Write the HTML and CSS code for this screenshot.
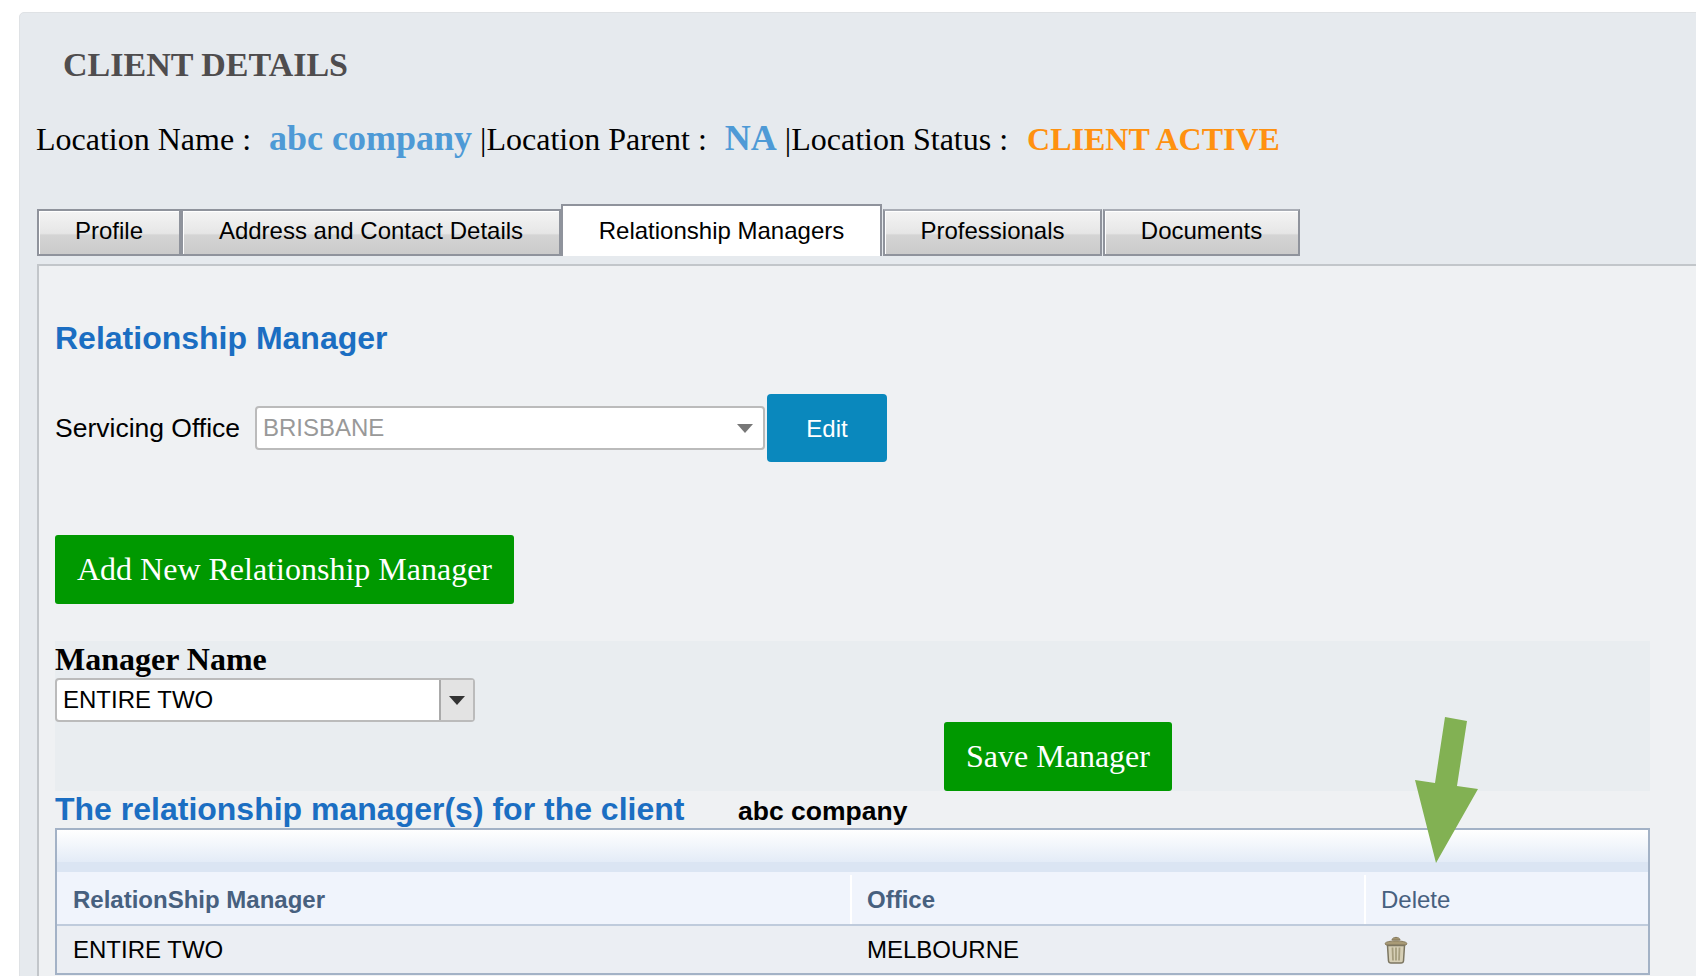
FILE: index.html
```html
<!DOCTYPE html>
<html lang="en">
<head>
<meta charset="utf-8">
<title>Client Details</title>
<link rel="stylesheet" href="styles.css">
</head>
<body>
<div class="panel">
  <h1 class="title">CLIENT DETAILS</h1>
  <div class="location">
    <span class="loc-label">Location Name :&nbsp;</span><span class="loc-value">&nbsp;abc company</span><span class="sep">&nbsp;|</span><span class="loc-label">Location Parent :&nbsp;</span><span class="loc-value">&nbsp;NA</span><span class="sep">&nbsp;|</span><span>Location Status :&nbsp;</span><span class="loc-status">&nbsp;CLIENT ACTIVE</span>
  </div>
  <div class="tabs">
    <div class="tab tab-profile">Profile</div>
    <div class="tab tab-address">Address and Contact Details</div>
    <div class="tab tab-active">Relationship Managers</div>
    <div class="tab tab-pro">Professionals</div>
    <div class="tab tab-docs">Documents</div>
  </div>
  <div class="content">
    <h2 class="heading">Relationship Manager</h2>
    <div class="office-row">
      <label class="office-label">Servicing Office</label>
      <div class="select-office">
        <span>BRISBANE</span>
        <svg class="caret" width="16" height="10" viewBox="0 0 16 10"><path d="M0 1h16L8 10z" fill="#777"/></svg>
      </div>
      <div class="btn-edit">Edit</div>
    </div>
    <div class="btn-green btn-add">Add New Relationship Manager</div>
    <div class="manager-block">
      <div class="manager-label">Manager Name</div>
      <div class="select-manager">
        <span class="select-value">ENTIRE TWO</span>
        <span class="select-btn"><svg width="16" height="10" viewBox="0 0 16 10"><path d="M0 1h16L8 10z" fill="#333"/></svg></span>
      </div>
      <div class="btn-green btn-save">Save Manager</div>
    </div>
    <div class="list-title">
      <span class="list-heading">The relationship manager(s) for the client</span>
      <span class="list-client">abc company</span>
    </div>
    <div class="grid">
      <div class="grid-top"></div>
      <div class="grid-head">
        <div class="col col-a th">RelationShip Manager</div>
        <div class="col col-b th">Office</div>
        <div class="col col-c th th-plain">Delete</div>
      </div>
      <div class="grid-row">
        <div class="col col-a">ENTIRE TWO</div>
        <div class="col col-b">MELBOURNE</div>
        <div class="col col-c">
          <svg width="24" height="28" viewBox="0 0 24 28">
            <path d="M8 4c0-3.500 8-3.500 8 0z" fill="#a3946f" stroke="#85785a" stroke-width="1"/>
            <path d="M1 7.500c1-3.500 21-3.500 22 0l-1 1.500H2z" fill="#a89a76" stroke="#8a7d5e" stroke-width="1"/>
            <path d="M3.500 9.500h17l-1 15.500c-.2 1.300-1 2-2.500 2H7c-1.500 0-2.300-.7-2.500-2z" fill="#d6cfb6" stroke="#7c7661" stroke-width="1.500"/>
            <path d="M8.500 11.500l.5 13M12 11.500v13M15.500 11.500l-.5 13" stroke="#a69e7f" stroke-width="1.800" fill="none"/>
          </svg>
        </div>
      </div>
    </div>
  </div>
  <svg class="arrow" width="65" height="148" viewBox="0 0 65 148"><polygon points="30,0 52,4 42,69 63,72 21,146 0,63 20,66" fill="#82b153"/></svg>
</div>
</body>
</html>
```
FILE: styles.css
```css
html, body {
  margin: 0;
  padding: 0;
  height: 976px;
  overflow: hidden;
  background: #fff;
}
body {
  font-family: "Liberation Sans", Arial, sans-serif;
  color: #000;
}
.panel {
  position: relative;
  box-sizing: border-box;
  width: 1800px;
  height: 1000px;
  margin: 12px 0 0 19px;
  padding: 0 0 0 17px;
  background: #e6eaee;
  border: 1px solid #dfe2e5;
  border-radius: 5px;
}
.title {
  margin: 32px 0 0 26px;
  height: 40px;
  font: bold 34px/40px "Liberation Serif", "Times New Roman", serif;
  color: #4f4d4e;
}
.location {
  display: flex;
  align-items: baseline;
  margin: 33px 0 0 -1px;
  height: 40px;
  font: 32px/40px "Liberation Serif", "Times New Roman", serif;
  white-space: pre;
}
.loc-label {
  padding-right: 1px;
}
.loc-value {
  font-size: 36px;
  font-weight: bold;
  color: #4e9ad6;
}
.loc-status {
  margin-left: 3px;
  font-size: 32px;
  font-weight: bold;
  color: #ff9110;
}
.tabs {
  display: flex;
  align-items: flex-end;
  margin-top: 46px;
  height: 52px;
}
.tab {
  box-sizing: border-box;
  height: 47px;
  padding-bottom: 4px;
  display: flex;
  align-items: center;
  justify-content: center;
  font-size: 24px;
  margin-right: 1px;
  border: 2px solid #8f939c;
  box-shadow: inset 1px 1px 0 #fff;
  background: linear-gradient(#f4f4f4 0, #e6e6e6 52%, #d4d4d4 56%, #cbcbcb 100%);
}
.tab-profile { width: 144px; margin-right: 0; }
.tab-address { width: 380px; margin-right: 0; }
.tab-active {
  width: 321px;
  height: 52px;
  padding-bottom: 0;
  background: #fff;
  border-bottom: 0;
  box-shadow: none;
}
.tab-pro { width: 219px; border-top-color: #a9adb5; }
.tab-docs { width: 197px; border-top-color: #a9adb5; }
.content {
  box-sizing: border-box;
  margin-top: 8px;
  height: 760px;
  padding: 54px 0 0 16px;
  background: #eff1f3;
  border: 2px solid #c2c6ca;
  border-right: 0;
}
.heading {
  margin: 0;
  height: 36px;
  font: bold 32px/36px "Liberation Sans", Arial, sans-serif;
  color: #1b6ec2;
}
.office-row {
  display: flex;
  align-items: center;
  margin-top: 38px;
  height: 68px;
}
.office-label {
  width: 200px;
  font-size: 26.500px;
}
.select-office {
  box-sizing: border-box;
  display: flex;
  align-items: center;
  justify-content: space-between;
  width: 510px;
  height: 44px;
  padding: 0 10px 0 6px;
  background: #fff;
  border: 2px solid #bbb;
  border-radius: 4px;
  font-size: 24px;
  color: #999;
}
.btn-edit {
  box-sizing: border-box;
  display: flex;
  align-items: center;
  justify-content: center;
  width: 120px;
  height: 68px;
  margin-left: 2px;
  padding-top: 2px;
  background: #0a88bd;
  border-radius: 4px;
  color: #fff;
  font-size: 24px;
}
.btn-green {
  box-sizing: border-box;
  display: flex;
  align-items: center;
  justify-content: center;
  height: 70px;
  background: #009900;
  border-radius: 3px;
  color: #fff;
  font: 32px "Liberation Serif", "Times New Roman", serif;
}
.btn-add {
  width: 459px;
  height: 69px;
  margin-top: 73px;
}
.manager-block {
  margin-top: 37px;
  height: 150px;
  width: 1595px;
  background: #e9edf0;
}
.manager-label {
  height: 37px;
  font: bold 32px/36px "Liberation Serif", "Times New Roman", serif;
}
.select-manager {
  box-sizing: border-box;
  display: flex;
  width: 420px;
  height: 44px;
  background: #fff;
  border: 2px solid #bbb;
  border-radius: 4px;
  font-size: 24px;
}
.select-value {
  flex: 1;
  padding-left: 6px;
  line-height: 40px;
}
.select-btn {
  display: flex;
  align-items: center;
  justify-content: center;
  width: 32px;
  background: #e3e3e3;
  border-left: 2px solid #aaa;
}
.btn-save {
  width: 228px;
  height: 69px;
  margin: 0 0 0 889px;
}
.list-title {
  display: flex;
  align-items: center;
  height: 37px;
}
.list-heading {
  width: 683px;
  font-size: 32px;
  font-weight: bold;
  color: #1b6ec2;
}
.list-client {
  padding-top: 3px;
  font-size: 26.500px;
  font-weight: bold;
}
.grid {
  box-sizing: border-box;
  width: 1595px;
  height: 147px;
  border: 2px solid #a3b2c6;
}
.grid-top {
  height: 42px;
  background: linear-gradient(#fff 0, #e4ecf7 75%, #dbe5f3 76%, #dbe5f3 100%);
}
.grid-head {
  display: flex;
  height: 54px;
  padding-top: 3px;
  background: #f0f4fc;
  border-bottom: 2px solid #bfcbdc;
  box-sizing: border-box;
}
.grid-row {
  display: flex;
  height: 47px;
  background: #ebeef3;
  font-size: 24px;
}
.col {
  box-sizing: border-box;
  display: flex;
  align-items: center;
  padding-left: 16px;
}
.col-a { width: 795px; }
.col-b { width: 514px; padding-left: 15px; }
.col-c { flex: 1; padding-left: 18px; }
.th {
  font-size: 24px;
  font-weight: bold;
  color: #47607f;
  border-right: 2px solid #fff;
}
.th-plain {
  font-weight: normal;
  padding-left: 15px;
  border-right: 0;
}
.arrow {
  position: absolute;
  left: 1395px;
  top: 704px;
}
```
